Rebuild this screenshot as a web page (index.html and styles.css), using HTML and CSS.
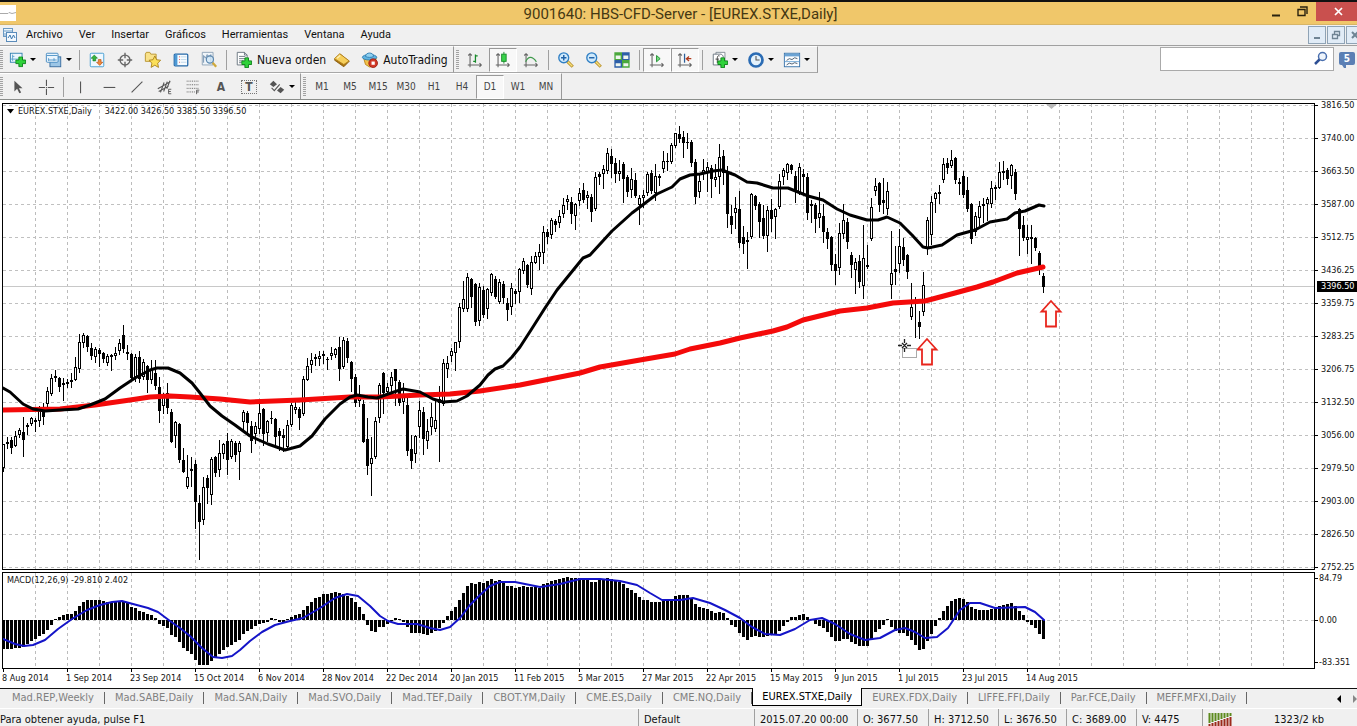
FILE: index.html
```html
<!DOCTYPE html>
<html lang="es">
<head>
<meta charset="utf-8">
<title>9001640: HBS-CFD-Server - [EUREX.STXE,Daily]</title>
<link rel="stylesheet" href="styles.css">
</head>
<body>
<svg class="defs" aria-hidden="true">
  <defs>
    <symbol id="i-plus" viewBox="0 0 12 12"><path d="M4 .5h4V4h3.500v4H8v3.500H4V8H.5V4H4z" fill="#2fd23a" stroke="#0a7d16"/></symbol>
    <symbol id="i-newchart" viewBox="0 0 20 20"><rect x="1.500" y="2.500" width="13" height="10" fill="#eaf5fd" stroke="#2f7fb0"/><path d="M4 4v7M2 9h11M4 6h2" stroke="#5aa2cc" fill="none"/><use href="#i-plus" x="7" y="6" width="12" height="12"/></symbol>
    <symbol id="i-profiles" viewBox="0 0 20 20"><rect x="5.500" y="6.500" width="12" height="11" fill="#9cc6e6" stroke="#34699c"/><rect x="1.500" y="2.500" width="13" height="10" rx="1" fill="#eaf5fd" stroke="#3f86bd"/><path d="M2 5h12M4 10h9M4 8v3M10 8v3" stroke="#4d93c6" fill="none"/></symbol>
    <symbol id="i-market" viewBox="0 0 20 20"><rect x="2.500" y="2.500" width="15" height="15" rx="1" fill="#eef8ff" stroke="#3f9bd0"/><path d="M7 4.500l3.500 3.500H8.500v3h-3V8H3.500z" fill="#35b53f" stroke="#157a22" stroke-width=".7"/><path d="M13 16l-3.500-3.500h2v-3h3v3h2z" fill="#f08a3c" stroke="#b44c12" stroke-width=".7"/></symbol>
    <symbol id="i-target" viewBox="0 0 20 20"><circle cx="10" cy="10" r="5.500" fill="none" stroke="#666" stroke-width="1.500"/><path d="M10 2v6M10 12v6M2 10h6M12 10h6" stroke="#666" stroke-width="1.500"/></symbol>
    <symbol id="i-star" viewBox="0 0 20 20"><path d="M1.500 3.500l1-2h4l1 2h6v8h-12z" fill="#f9e28a" stroke="#b8922a"/><path d="M12 5.500l2 4.200 4.500.6-3.300 3.200.9 4.700L12 15.800l-4.100 2.400.9-4.700-3.300-3.200 4.500-.6z" fill="#fbe05a" stroke="#a8801c"/></symbol>
    <symbol id="i-nav" viewBox="0 0 20 20"><rect x="2.500" y="3.500" width="15" height="13" rx="1" fill="#f7fcff" stroke="#2468a8" stroke-width="1.400"/><path d="M3 4h3v12H3z" fill="#4d9ad6"/><path d="M8 6.500h1M8 9.500h1M8 12.500h1" stroke="#d33"/><path d="M10 6.500h6M10 9.500h6M10 12.500h6" stroke="#b9d4e8"/></symbol>
    <symbol id="i-tester" viewBox="0 0 20 20"><path d="M2.500 1.500h12v14h-12z" fill="#f0f5f9" stroke="#8aa0b4"/><path d="M4 13V5l2 3 2-4 2 3 2-3v8" fill="none" stroke="#6f8fae"/><circle cx="11" cy="9.500" r="4" fill="#cfe6f6" fill-opacity=".8" stroke="#5a86ae" stroke-width="1.300"/><path d="M14 13l4 4.500" stroke="#cfa93c" stroke-width="2.500"/></symbol>
    <symbol id="i-order" viewBox="0 0 20 20"><path d="M2.500 1.500h8l3 3v11h-11z" fill="#fff" stroke="#64707c"/><path d="M10.500 1.500v3h3M4.500 6h7M4.500 8.500h7M4.500 11h5M4.500 13h4" stroke="#64707c" fill="none"/><use href="#i-plus" x="7" y="7" width="12" height="12"/></symbol>
    <symbol id="i-book" viewBox="0 0 20 20"><path d="M1.500 10L8 3.500l10 8-6 6z" fill="#a8720f" stroke="#8a5c0c"/><path d="M1.500 8.500L7.500 3l10.500 8-6 4z" fill="#f6cf5c" stroke="#b07f1c"/><path d="M4.500 8l3.500-3" stroke="#fdf0b4" stroke-width="1.500"/></symbol>
    <symbol id="i-auto" viewBox="0 0 20 20"><path d="M3 8h14l-2 7-5 3-5-3z" fill="#f2c14a" stroke="#b98419"/><ellipse cx="9.500" cy="7" rx="8" ry="3" fill="#5fb4e2" stroke="#2d7cb0"/><path d="M5 6c0-5 9-5 9 0 -2 1.500-7 1.500-9 0z" fill="#8fd0f0" stroke="#2d7cb0"/><circle cx="13.500" cy="13.500" r="4.800" fill="#d23a28" stroke="#9c1d10"/><path d="M11.700 11.700h3.600v3.600h-3.600z" fill="#fff"/></symbol>
    <symbol id="i-axes" viewBox="0 0 20 20"><path d="M4.500 3v15M2 15.500h15M2.500 5l2-2 2 2M15 13.500l2 2-2 2" fill="none" stroke="#666" stroke-width="1.200"/></symbol>
    <symbol id="i-bars" viewBox="0 0 20 20"><use href="#i-axes" width="20" height="20"/><path d="M10.500 4v9M8 11.500h2.500M10.500 5.500H13" stroke="#178a2a" stroke-width="1.400" fill="none"/></symbol>
    <symbol id="i-candle" viewBox="0 0 20 20"><use href="#i-axes" width="20" height="20"/><path d="M11 1v13" stroke="#178a2a"/><rect x="8.500" y="3.500" width="5" height="8" fill="#39d24a" stroke="#178a2a"/></symbol>
    <symbol id="i-line" viewBox="0 0 20 20"><use href="#i-axes" width="20" height="20"/><path d="M4 12c3-6 7-7 12 0" stroke="#3f9a4c" stroke-width="1.300" fill="none"/></symbol>
    <symbol id="i-zoomin" viewBox="0 0 20 20"><path d="M11.500 11.500l6 6" stroke="#b8902c" stroke-width="3.500"/><path d="M12 12l5 5" stroke="#f6e07a" stroke-width="1.500"/><circle cx="7.500" cy="7.500" r="5.500" fill="#cfe9fb" stroke="#2f7fc4" stroke-width="1.500"/><path d="M7.500 4.500v6M4.500 7.500h6" stroke="#1f62a8" stroke-width="1.600"/></symbol>
    <symbol id="i-zoomout" viewBox="0 0 20 20"><path d="M11.500 11.500l6 6" stroke="#b8902c" stroke-width="3.500"/><path d="M12 12l5 5" stroke="#f6e07a" stroke-width="1.500"/><circle cx="7.500" cy="7.500" r="5.500" fill="#cfe9fb" stroke="#2f7fc4" stroke-width="1.500"/><path d="M4.500 7.500h6" stroke="#1f62a8" stroke-width="1.600"/></symbol>
    <symbol id="i-tile" viewBox="0 0 20 20"><path d="M1.500 1.500H10V10H1.500zM10 10h8.500v8.500H10z" fill="#4aa83c"/><path d="M10 1.500h8.500V10H10zM1.500 10H10v8.500H1.500z" fill="#2d5fa8"/><path d="M3 5h5.500v4H3zM11.500 5H17v4h-5.500zM3 13.500h5.500v3.500H3zM11.500 13.500H17v3.500h-5.500z" fill="#eef6ee"/></symbol>
    <symbol id="i-scroll" viewBox="0 0 20 20"><use href="#i-axes" width="20" height="20"/><path d="M9.500 5v7l4-3.500z" fill="#7be085" stroke="#178a2a"/></symbol>
    <symbol id="i-shift" viewBox="0 0 20 20"><use href="#i-axes" width="20" height="20"/><path d="M9.500 3v10" stroke="#2b5f9a" stroke-width="1.400"/><path d="M17 8.500h-5M14.500 6l-3 2.500 3 2.500" stroke="#b03a1c" stroke-width="1.400" fill="none"/></symbol>
    <symbol id="i-indic" viewBox="0 0 20 20"><path d="M5.500 1.500h10v12h-10z" fill="#fff" stroke="#7d8891"/><path d="M2.500 3.500h9l2 2v10h-11z" fill="#fff" stroke="#64707c"/><path d="M9.500 5.500c-2-1-2.500 1-2.500 3v5M5 9h4" stroke="#333" fill="none"/><use href="#i-plus" x="7" y="7" width="12" height="12"/></symbol>
    <symbol id="i-clock" viewBox="0 0 20 20"><circle cx="10" cy="10" r="7.200" fill="#e4f2fc" stroke="#2b6cb4" stroke-width="3"/><path d="M10 5.500V10h4" stroke="#555" stroke-width="1.200" fill="none"/></symbol>
    <symbol id="i-templ" viewBox="0 0 20 20"><rect x="1.500" y="2.500" width="17" height="15" fill="#fbfdff" stroke="#336fa8"/><path d="M2 3h16v3H2z" fill="#6ba3d4"/><path d="M2 11.800h16" stroke="#6ba3d4"/><path d="M4 10.500l3-2 3 1 3-2 3 1M4 15.500l3-2 3 1 3-1.500 3 1" stroke="#456" fill="none"/></symbol>
    <symbol id="i-cursor" viewBox="0 0 20 20"><path d="M6 3v12l3-3 2.500 5 2-1-2.500-4.500h4z" fill="#555"/></symbol>
    <symbol id="i-cross" viewBox="0 0 20 20"><path d="M10.500 2v7M10.500 12v7M2 10.500h7M12 10.500h7" stroke="#555" stroke-width="1.200"/><path d="M10 10h1v1h-1z" fill="#555"/></symbol>
    <symbol id="i-vline" viewBox="0 0 20 20"><path d="M9.500 4v13" stroke="#555" stroke-width="1.200"/></symbol>
    <symbol id="i-hline" viewBox="0 0 20 20"><path d="M4 10.500h13" stroke="#555" stroke-width="1.200"/></symbol>
    <symbol id="i-diag" viewBox="0 0 20 20"><path d="M4 16L16 4" stroke="#555" stroke-width="1.200"/></symbol>
    <symbol id="i-chan" viewBox="0 0 20 20"><path d="M2 12l14-8M3 15l11-6M5 16l4-11M8.500 15l4-11M12 12l3.500-9" stroke="#555" stroke-width="1.200"/><path d="M17 12.500h-3v5h3M14 15h2.500" stroke="#555" fill="none"/></symbol>
    <symbol id="i-fibo" viewBox="0 0 20 20"><path d="M3 3.500h14M3 7.500h14M3 11.500h14M3 15.500h9" stroke="#555" stroke-dasharray="1 1"/><path d="M17 13.500h-3V18M14 15.500h2.500" stroke="#555" fill="none"/></symbol>
    <symbol id="i-shapes" viewBox="0 0 20 20"><path d="M6 3l4 4-4 3-4-3z M14 10l4 3-4 4-4-3z" fill="#555"/><path d="M4 11l3 3 6-7" stroke="#555" fill="none" stroke-width="1.200"/></symbol>
  </defs>
</svg>

<header class="titlebar">
  <span class="app-icon"><svg width="16" height="16"><path d="M0 8.500h8l1-1 3 1 4-1" stroke="#aaa" fill="none"/></svg></span>
  <h1 class="title">9001640: HBS-CFD-Server - [EUREX.STXE,Daily]</h1>
  <div class="winbtns">
    <button class="winbtn" aria-label="Minimizar"><svg width="10" height="10"><path d="M1 8.500h8" stroke="#2a230f" stroke-width="2"/></svg></button>
    <button class="winbtn" aria-label="Restaurar"><svg width="11" height="11"><path d="M1 3.500h7v6H1zM3 1h7v7" stroke="#2a230f" stroke-width="1.400" fill="none"/></svg></button>
    <button class="winbtn winbtn-close" aria-label="Cerrar"><svg width="9" height="9"><path d="M1 1l7 7M8 1l-7 7" stroke="#fff" stroke-width="1.700"/></svg></button>
  </div>
</header>

<nav class="menubar">
  <svg class="menu-icon" width="16" height="16"><rect x="1.500" y="1.500" width="9" height="8" fill="#eef7fd" stroke="#6b9ac4"/><path d="M1 4h10M3 6v3" stroke="#6b9ac4"/><rect x="4.500" y="5.500" width="10" height="9" fill="#f3f9fe" stroke="#5b8cba"/><path d="M6 11l2-3 1.500 4 2-4 1.500 3" stroke="#3c78ae" fill="none"/></svg>
  <button class="menu">Archivo</button><button class="menu">Ver</button><button class="menu">Insertar</button><button class="menu">Gráficos</button><button class="menu">Herramientas</button><button class="menu">Ventana</button><button class="menu">Ayuda</button>
  <div class="mdi">
    <button class="mdibtn" aria-label="Minimizar gráfico"><svg width="10" height="10"><path d="M2 8h6" stroke="#6f8494" stroke-width="2"/></svg></button>
    <button class="mdibtn" aria-label="Restaurar gráfico"><svg width="10" height="10"><path d="M1.500 4.500h5v4h-5zM3.500 4V1.500h5v4H7" stroke="#6f8494" stroke-width="1.300" fill="none"/></svg></button>
    <button class="mdibtn" aria-label="Cerrar gráfico"><svg width="10" height="10"><path d="M2 2l6 6M8 2L2 8" stroke="#6f8494" stroke-width="2"/></svg></button>
  </div>
</nav>

<div class="toolrow">
  <div class="toolbar">
    <span class="grip"></span>
    <button class="tool drop" aria-label="Nuevo gráfico"><svg class="ico"><use href="#i-newchart"/></svg></button>
    <button class="tool drop" aria-label="Perfiles"><svg class="ico"><use href="#i-profiles"/></svg></button>
    <span class="sep"></span>
    <button class="tool" aria-label="Observación del mercado"><svg class="ico"><use href="#i-market"/></svg></button>
    <button class="tool" aria-label="Ventana de datos"><svg class="ico"><use href="#i-target"/></svg></button>
    <button class="tool" aria-label="Navegador"><svg class="ico"><use href="#i-star"/></svg></button>
    <button class="tool" aria-label="Terminal"><svg class="ico"><use href="#i-nav"/></svg></button>
    <button class="tool" aria-label="Probador"><svg class="ico"><use href="#i-tester"/></svg></button>
    <span class="sep"></span>
    <button class="tool wide"><svg class="ico"><use href="#i-order"/></svg><span>Nueva orden</span></button>
    <button class="tool" aria-label="MetaEditor"><svg class="ico"><use href="#i-book"/></svg></button>
    <button class="tool wide"><svg class="ico"><use href="#i-auto"/></svg><span>AutoTrading</span></button>
  </div>
  <div class="toolbar">
    <span class="grip"></span>
    <button class="tool" aria-label="Barras"><svg class="ico"><use href="#i-bars"/></svg></button>
    <button class="tool pressed" aria-label="Velas"><svg class="ico"><use href="#i-candle"/></svg></button>
    <button class="tool" aria-label="Línea"><svg class="ico"><use href="#i-line"/></svg></button>
    <span class="sep"></span>
    <button class="tool" aria-label="Acercar"><svg class="ico"><use href="#i-zoomin"/></svg></button>
    <button class="tool" aria-label="Alejar"><svg class="ico"><use href="#i-zoomout"/></svg></button>
    <button class="tool" aria-label="Mosaico"><svg class="ico"><use href="#i-tile"/></svg></button>
    <span class="sep"></span>
    <button class="tool pressed" aria-label="Desplazamiento automático"><svg class="ico"><use href="#i-scroll"/></svg></button>
    <button class="tool pressed" aria-label="Desplazar gráfico"><svg class="ico"><use href="#i-shift"/></svg></button>
    <span class="sep"></span>
    <button class="tool drop" aria-label="Indicadores"><svg class="ico"><use href="#i-indic"/></svg></button>
    <button class="tool drop" aria-label="Períodos"><svg class="ico"><use href="#i-clock"/></svg></button>
    <button class="tool drop" aria-label="Plantillas"><svg class="ico"><use href="#i-templ"/></svg></button>
  </div>
  <form class="search">
    <input class="search-input" type="text" aria-label="Buscar">
    <button class="search-btn" type="button" aria-label="Buscar"><svg width="14" height="14"><circle cx="8.500" cy="5.500" r="4" fill="#eef4fb" stroke="#4a6fae" stroke-width="1.500"/><path d="M5.500 8.500L1 13" stroke="#2d4f94" stroke-width="2.500"/></svg></button>
    <button class="news" type="button">5</button>
  </form>
</div>

<div class="toolrow toolrow-second">
  <div class="toolbar">
    <span class="grip"></span>
    <button class="tool" aria-label="Cursor"><svg class="ico"><use href="#i-cursor"/></svg></button>
    <button class="tool" aria-label="Cruz"><svg class="ico"><use href="#i-cross"/></svg></button>
    <span class="sep"></span>
    <button class="tool" aria-label="Línea vertical"><svg class="ico"><use href="#i-vline"/></svg></button>
    <button class="tool" aria-label="Línea horizontal"><svg class="ico"><use href="#i-hline"/></svg></button>
    <button class="tool" aria-label="Línea de tendencia"><svg class="ico"><use href="#i-diag"/></svg></button>
    <button class="tool" aria-label="Canal equidistante"><svg class="ico"><use href="#i-chan"/></svg></button>
    <button class="tool" aria-label="Fibonacci"><svg class="ico"><use href="#i-fibo"/></svg></button>
    <button class="tool glyph">A</button>
    <button class="tool glyph"><span class="boxed">T</span></button>
    <button class="tool drop" aria-label="Flechas"><svg class="ico"><use href="#i-shapes"/></svg></button>
  </div>
  <div class="toolbar">
    <span class="grip"></span>
    <button class="tool tf">M1</button><button class="tool tf">M5</button><button class="tool tf">M15</button><button class="tool tf">M30</button><button class="tool tf">H1</button><button class="tool tf">H4</button><button class="tool tf pressed">D1</button><button class="tool tf">W1</button><button class="tool tf">MN</button>
  </div>
</div>

<main class="chart">
  <section class="pane price-pane">
    <svg class="plot" id="price-plot" role="img" aria-label="EUREX.STXE diario"></svg>
    <p class="caption"><svg width="7" height="5"><path d="M0 0h7L3.500 4.500z"/></svg><span class="symbol">EUREX.STXE,Daily</span><span>3422.00 3426.50 3385.50 3396.50</span></p>
  </section>
  <div class="axis price-axis">
    <span>3816.50</span><span>3740.00</span><span>3663.50</span><span>3587.00</span><span>3512.75</span><span>3436.25</span><span>3359.75</span><span>3283.25</span><span>3206.75</span><span>3132.50</span><span>3056.00</span><span>2979.50</span><span>2903.00</span><span>2826.50</span><span>2752.25</span>
    <strong class="quote">3396.50</strong>
  </div>
  <section class="pane macd-pane">
    <svg class="plot" id="macd-plot" role="img" aria-label="MACD"></svg>
    <p class="caption">MACD(12,26,9) -29.810 2.402</p>
  </section>
  <div class="axis macd-axis"><span>84.79</span><span>0.00</span><span>-83.351</span></div>
  <div class="dates">
    <span>8 Aug 2014</span><span>1 Sep 2014</span><span>23 Sep 2014</span><span>15 Oct 2014</span><span>6 Nov 2014</span><span>28 Nov 2014</span><span>22 Dec 2014</span><span>20 Jan 2015</span><span>11 Feb 2015</span><span>5 Mar 2015</span><span>27 Mar 2015</span><span>22 Apr 2015</span><span>15 May 2015</span><span>9 Jun 2015</span><span>1 Jul 2015</span><span>23 Jul 2015</span><span>14 Aug 2015</span>
  </div>
</main>

<nav class="tabs">
  <a class="tab" href="#">Mad.REP,Weekly</a><a class="tab" href="#">Mad.SABE,Daily</a><a class="tab" href="#">Mad.SAN,Daily</a><a class="tab" href="#">Mad.SVO,Daily</a><a class="tab" href="#">Mad.TEF,Daily</a><a class="tab" href="#">CBOT.YM,Daily</a><a class="tab" href="#">CME.ES,Daily</a><a class="tab" href="#">CME.NQ,Daily</a><a class="tab active" href="#" aria-current="page">EUREX.STXE,Daily</a><a class="tab" href="#">EUREX.FDX,Daily</a><a class="tab" href="#">LIFFE.FFI,Daily</a><a class="tab" href="#">Par.FCE,Daily</a><a class="tab" href="#">MEFF.MFXI,Daily</a>
  <div class="tab-scroll">
    <button class="arrow" aria-label="Anterior"><svg width="5" height="8"><path d="M4 0v8L0 4z"/></svg></button>
    <button class="arrow" aria-label="Siguiente"><svg width="5" height="8"><path d="M0 0v8l4-4z" fill="#888"/></svg></button>
  </div>
</nav>

<footer class="status">
  <span class="help">Para obtener ayuda, pulse F1</span>
  <span>Default</span><span>2015.07.20 00:00</span><span>O: 3677.50</span><span>H: 3712.50</span><span>L: 3676.50</span><span>C: 3689.00</span><span>V: 4475</span>
  <span class="link-state"><svg width="24" height="13"><path d="M1.500 0v10M4.500 0v9M7.500 0v8M10.500 0v7M13.500 0v6M16.500 0v5M19.500 0v4M22.500 0v3" stroke="#5d8a1e" stroke-width="2"/><path d="M1.500 11v2M4.500 10v3M7.500 9v4M10.500 8v5M13.500 7v6M16.500 6v7M19.500 5v8M22.500 4v9" stroke="#9c2a1c" stroke-width="2"/></svg><span>1323/2 kb</span></span>
</footer>
<script src="chart.js"></script>
</body>
</html>
```
FILE: styles.css
```css
* { box-sizing: border-box; }
html { height: 100%; }
body {
  margin: 0;
  height: 100%;
  display: flex;
  flex-direction: column;
  overflow: hidden;
  background: #f0f0f0;
  color: #111;
  font: 11px/14px "DejaVu Sans Condensed", "Noto Sans", sans-serif;
}
button {
  margin: 0;
  padding: 0;
  border: 0;
  background: none;
  color: inherit;
  font: inherit;
}
svg { display: block; flex: none; }
.defs { position: absolute; width: 0; height: 0; }

.titlebar {
  flex: none;
  display: flex;
  align-items: flex-start;
  height: 25px;
  background: #f0c76a;
  border-top: 2px solid #111;
  border-bottom: 1px solid #d8b566;
}
.app-icon { width: 16px; height: 16px; margin-top: 3px; background: #fff; }
.title {
  flex: 1;
  margin: 0;
  padding-left: 82px;
  text-align: center;
  font: 15px/24px Roboto, "Noto Sans", sans-serif;
  color: #453813;
}
.winbtns { display: flex; }
.winbtn { width: 26px; height: 19px; display: flex; align-items: center; justify-content: center; }
.winbtn-close { width: 41px; margin-left: 1px; background: #c9504e; padding-left: 4px; }

.menubar {
  flex: none;
  display: flex;
  align-items: center;
  height: 21px;
  border-bottom: 1px solid #a0a0a0;
  font: 11px/20px Roboto, "Liberation Sans", sans-serif;
}
.menu-icon { margin-left: 2px; margin-right: 8px; }
.menu { margin-right: 16px; }
.mdi { display: flex; gap: 1px; margin-left: auto; margin-right: -7px; }
.mdibtn {
  width: 18px;
  height: 18px;
  display: flex;
  align-items: center;
  justify-content: center;
  background: #e1ecf7;
  border: 1px solid #8fa3b5;
}

.toolrow { flex: none; display: flex; height: 27px; }
.toolrow-second { border-bottom: 1px solid #8a8d8a; }
.toolbar {
  display: flex;
  align-items: center;
  border-top: 1px solid #fff;
  border-right: 1px solid #999;
  border-bottom: 1px solid #a8a8a8;
  padding-right: 3px;
}
.toolrow-second .toolbar { border-bottom: 0; padding-right: 1px; }
.toolbar + .toolbar { padding-left: 2px; }
.grip {
  width: 3px;
  height: 20px;
  margin-right: 1px;
  background: repeating-linear-gradient(#a2a2a2 0 1px, #f0f0f0 1px 2px);
}
.toolbar + .toolbar .grip { margin-right: 2px; }
.sep { width: 7px; height: 20px; border-left: 3px solid #f0f0f0; background: linear-gradient(90deg, #a0a0a0 1px, #f0f0f0 1px); }
.tool {
  flex: none;
  display: flex;
  align-items: center;
  justify-content: center;
  width: 28px;
  height: 24px;
  border: 1px solid transparent;
}
.ico { width: 18px; height: 18px; }
.drop { width: 36px; justify-content: flex-start; padding-left: 4px; }
.drop::after {
  content: "";
  margin-left: 3px;
  border: 3px solid transparent;
  border-top-color: #000;
  border-bottom: 0;
}
.wide { width: auto; padding: 0 1px 0 4px; gap: 4px; font-size: 12px; }
.pressed { background: #f8f8f8; border-color: #999 #fff #fff #999; }
.glyph { color: #555; font-weight: bold; font-size: 12px; }
.boxed { padding: 0 3px; border: 1px dotted #777; line-height: 12px; }
.tf { font-size: 10px; color: #444; }

.search { display: flex; margin-left: auto; padding: 1px 0; }
.search-input { width: 174px; height: 24px; padding: 0 22px 0 4px; border: 1px solid #aaa; background: #fff; font: inherit; }
.search-btn { width: 22px; height: 22px; margin-left: -20px; display: flex; align-items: center; position: relative; }
.news {
  position: relative;
  width: 16px;
  height: 13px;
  margin: 5px 2px 0 3px;
  border-radius: 2px;
  background: #5b7fb4;
  color: #fff;
  font-size: 10px;
  font-weight: bold;
  line-height: 13px;
}
.news::after { content: ""; position: absolute; left: 3px; top: 13px; border: 2px solid transparent; border-top: 3px solid #5b7fb4; border-right-color: #5b7fb4; border-bottom: 0; }

.chart {
  flex: 1;
  min-height: 0;
  display: grid;
  grid-template-columns: 1fr 42px;
  grid-template-rows: minmax(0, 1fr) 98px 19px;
  padding-left: 2px;
  background: #fff;
  font-size: 9px;
  line-height: 11px;
  border-bottom: 1px solid #111;
  overflow: hidden;
}
.pane { position: relative; border: 1px solid #000; overflow: hidden; }
.price-pane { margin: 3px 0 1px; }
.macd-pane { margin-top: 1px; }
.plot { position: absolute; inset: 0; width: 100%; height: 100%; }
.caption { position: absolute; left: 4px; top: 2px; margin: 0; display: flex; gap: 4px; align-items: center; }
.symbol { margin-right: 9px; }
.axis { position: relative; display: flex; flex-direction: column; }
.axis span { position: relative; padding-left: 6px; }
.axis span::before { content: ""; position: absolute; left: 0; top: 5px; width: 3px; height: 1px; background: #000; }
.price-axis { gap: 22px; }
.quote {
  position: absolute;
  left: 2px;
  right: 0;
  top: 181px;
  padding-left: 4px;
  background: #000;
  color: #fff;
  font-weight: normal;
}
.macd-axis { justify-content: space-between; padding: 2px 0 1px; }
.macd-axis span { padding-left: 4px; }
.dates { display: flex; grid-column: 1 / -1; }
.dates span { flex: none; position: relative; width: 64px; padding-top: 4px; white-space: nowrap; }
.dates span::before { content: ""; position: absolute; left: 1px; top: 0; width: 1px; height: 3px; background: #000; }

.tabs { flex: none; display: flex; height: 20px; padding-left: 2px; border-bottom: 1px solid #fff; }
.tab {
  position: relative;
  padding: 0 11px 0 10px;
  color: #808080;
  text-decoration: none;
  line-height: 17px;
  white-space: nowrap;
}
.tab::after { content: ""; position: absolute; right: 0; top: 3px; width: 1px; height: 12px; background: #666; }
.tab.active { height: 18px; margin-top: -1px; line-height: 18px; padding: 0 9px; background: #fff; color: #000; border: 1px solid #000; border-top: 0; }
.tab.active::after { content: none; }
.tab-scroll { display: flex; gap: 11px; align-items: center; margin-left: auto; margin-right: -1px; }

.status {
  flex: none;
  display: grid;
  grid-template-columns: 1fr 116px 103px 71px 70px 68px 70px 66px 155px;
  height: 17px;
  line-height: 14px;
  white-space: nowrap;
}
.status > span { padding: 4px 0 0 5px; border-left: 1px solid #a0a0a0; }
.status .help { padding-left: 0; border-left: 0; }
.status .link-state { display: flex; gap: 42px; }
```
FILE: chart.js
```js
const STEP = 4;
const FIRST_X = 3;

// high, body top, body bottom, low (canvas y) and f = filled / o = hollow
const candles = `444 444 468 471 o|437 442 444 448 f|437 440 448 453 f|431 436 446 446 o|428 430 435 437 o|417 432 440 456 f|423 425 427 434 f|417 418 424 425 o|418 420 422 431 f|406 408 421 426 o|403 408 417 424 f|387 391 404 406 o|374 378 394 395 o|370 376 378 381 f|377 378 387 391 f|378 383 385 400 f|379 382 384 387 f|373 380 382 387 f|357 367 380 380 o|334 342 369 372 o|333 335 343 347 o|335 336 347 351 f|343 348 356 359 f|347 349 357 362 o|348 350 354 366 f|352 353 359 362 f|354 356 363 365 o|354 355 357 370 f|347 353 356 359 o|339 343 351 354 o|325 335 349 352 f|345 352 354 359 f|353 354 378 379 f|354 357 377 381 o|351 357 379 382 f|359 362 377 379 o|365 366 380 392 f|360 370 380 383 o|360 373 386 389 f|377 387 411 422 f|393 397 406 413 o|383 393 408 413 f|409 412 442 442 f|421 422 436 447 o|423 424 460 462 f|448 460 472 472 f|455 477 487 488 o|457 469 471 486 f|460 464 502 528 f|495 503 522 559 f|477 487 520 524 o|475 478 488 503 f|457 459 495 504 o|456 457 473 476 f|440 453 470 476 o|443 444 454 458 o|433 441 460 474 f|439 441 457 458 o|441 443 455 461 f|441 443 452 479 o|410 412 422 431 o|411 413 423 433 f|421 426 441 452 f|422 426 434 443 o|403 413 429 433 o|408 409 434 445 f|420 421 433 441 o|411 418 419 423 f|418 419 437 445 f|428 431 436 450 f|429 435 438 451 f|420 425 447 448 o|403 405 425 426 o|402 407 410 413 o|407 409 418 429 f|376 379 414 415 o|358 366 380 380 o|353 360 365 372 o|354 357 359 365 f|351 356 359 365 o|351 354 356 363 f|357 359 360 369 f|347 353 356 359 o|348 349 355 357 o|337 347 369 380 f|337 340 367 368 o|338 341 358 362 f|361 362 379 391 f|374 377 403 406 f|385 398 401 406 o|400 404 442 442 f|418 439 466 474 f|437 458 464 495 o|417 421 457 458 o|383 385 418 422 o|372 373 393 413 f|383 387 392 395 o|372 377 386 391 o|369 369 381 405 f|380 382 403 405 f|383 397 402 413 o|397 405 451 455 f|435 449 461 468 f|435 436 454 462 o|401 410 427 437 o|407 412 439 454 f|419 431 441 448 o|403 417 427 434 o|400 420 429 431 o|386 399 403 461 o|359 363 404 405 o|356 363 369 377 o|348 351 356 361 o|342 342 353 370 o|303 307 342 347 o|281 299 309 311 o|273 277 309 311 o|278 279 297 307 f|283 284 322 325 f|283 287 321 325 o|286 290 315 317 f|288 289 309 318 o|273 274 293 295 o|276 279 297 298 f|279 282 302 303 o|281 284 298 303 f|298 303 310 320 f|283 288 307 314 o|289 291 294 303 f|268 269 292 302 o|258 261 271 273 o|264 265 285 287 f|256 262 289 294 o|252 256 263 263 o|244 252 257 269 o|226 232 253 263 o|229 232 237 243 f|218 220 235 238 o|219 221 225 231 f|210 216 223 227 o|198 205 214 217 o|195 199 202 209 o|197 202 214 223 f|203 204 216 229 o|188 193 201 205 o|183 190 200 202 f|191 195 198 208 o|194 197 212 221 f|172 177 209 210 o|172 174 177 184 f|165 169 174 188 o|148 153 171 173 o|149 156 164 177 f|158 163 174 182 f|160 171 174 180 o|162 164 179 202 f|175 177 192 196 f|168 179 190 197 o|173 180 196 197 f|195 198 205 224 o|190 195 198 207 o|172 174 193 195 o|170 173 191 193 f|164 176 193 200 o|174 176 178 185 f|151 161 169 172 o|153 161 162 170 f|143 145 162 163 o|133 133 146 147 o|126 134 139 142 f|131 137 143 157 f|133 142 143 148 f|140 142 163 166 f|159 162 197 203 f|174 181 192 197 o|159 170 173 179 o|162 167 173 191 o|165 168 179 197 f|164 177 180 186 o|144 157 177 193 o|150 156 173 184 f|166 171 214 227 f|205 216 225 233 f|197 208 213 228 o|191 209 243 247 f|226 237 244 253 f|232 240 242 268 f|193 194 237 238 o|195 196 206 209 f|202 204 222 237 f|205 218 236 238 f|206 210 236 251 o|199 210 219 231 f|208 209 217 238 o|174 181 207 208 o|168 170 177 184 o|163 164 173 179 o|164 165 170 173 f|171 176 192 202 f|163 167 192 194 o|169 174 177 193 f|173 177 213 219 f|200 204 206 222 f|203 205 219 232 f|192 213 218 227 o|204 216 232 242 f|228 232 239 248 f|236 237 265 270 f|254 264 271 284 f|223 233 268 274 o|204 220 234 238 o|218 222 242 248 f|252 255 265 277 f|258 262 270 293 o|255 261 282 287 f|225 258 286 298 o|245 265 267 268 f|198 207 239 240 o|178 186 191 195 o|182 183 205 211 f|178 200 203 213 f|182 191 209 214 o|231 273 285 298 o|246 269 272 284 f|229 246 264 272 o|238 247 260 265 f|254 255 272 278 f|283 307 317 319 o|297 300 302 337 f|311 322 327 338 f|272 285 312 315 o|217 220 249 254 o|196 202 235 244 o|192 193 199 212 o|185 192 194 203 f|158 164 180 182 o|158 163 168 173 f|150 160 166 167 o|157 158 180 183 f|178 182 184 194 f|171 176 195 197 f|177 190 209 211 f|203 204 239 243 f|212 216 232 235 o|201 206 218 225 o|198 204 206 222 f|197 199 204 220 o|181 188 204 207 o|185 187 189 199 f|162 172 188 188 o|161 171 173 179 f|168 170 179 184 f|164 165 176 188 o|169 172 194 199 f|208 209 229 255 f|216 225 238 240 f|225 237 240 253 o|225 237 239 263 f|237 238 248 250 f|251 253 270 274 f|273 276 287 292 f`
  .split('|').map(s => s.split(' '));

// histogram ends, in thirds of a pixel above (<165) or below (>165) the zero line
const macd = [250,250,250,247,247,243,233,225,219,210,204,192,178,163,156,151,148,147,138,123,111,105,105,105,105,107,110,112,110,109,111,113,125,129,137,141,146,151,160,173,180,187,207,213,229,245,255,265,281,297,297,297,284,276,265,253,243,236,229,221,205,194,190,181,173,172,169,160,163,167,168,162,156,151,148,135,122,110,99,95,88,87,85,82,85,88,94,98,111,126,148,177,194,197,184,182,174,165,160,163,168,182,200,202,202,204,206,200,195,186,170,153,138,127,104,85,64,55,56,51,54,49,43,49,46,53,63,63,69,66,63,66,66,66,68,57,53,48,45,42,40,37,39,40,40,42,45,51,50,46,44,39,42,46,50,57,70,75,84,96,105,105,111,111,111,107,106,101,94,91,91,91,98,117,127,129,132,137,144,141,144,158,177,184,201,213,221,213,210,213,214,211,208,208,194,179,168,156,155,151,147,156,163,173,180,187,199,213,225,225,218,218,228,233,240,240,240,222,199,190,177,162,182,196,200,201,210,223,237,251,248,225,204,180,160,139,122,108,101,98,102,111,126,133,136,136,136,133,128,124,121,118,114,122,137,151,167,177,187,205,218];

const fastAverage = '3,388 10,392 23,404 33,409 45,411 60,410 78,409 90,405 105,399 120,388 135,378 150,370 157,368 168,368 180,373 192,383 200,393 210,406 222,416 235,425 250,436 268,444 285,450 300,446 312,436 325,419 340,404 350,397 357,395 368,397 377,398 388,394 403,389 420,392 433,399 443,402 457,401 467,396 480,385 488,375 495,369 503,366 512,357 520,347 531,330 545,308 557,290 570,274 583,258 590,255 612,231 632,213 640,207 657,194 672,187 680,179 690,175 700,174 713,171 722,170 727,172 735,175 747,182 757,183 773,188 788,188 808,196 823,200 837,209 850,215 867,220 878,220 887,217 900,223 912,235 923,247 928,248 942,245 957,235 975,230 990,222 1007,219 1015,213 1025,211 1039,205 1044,206';
const slowAverage = '3,410 60,409 95,405 130,400 150,397 170,396 190,397 220,399 250,402 300,400 350,397 380,397 420,395 450,394 480,391 520,385 550,379 580,373 600,367 640,360 675,354 690,349 720,343 740,338 773,331 787,327 803,320 840,311 867,308 893,303 925,301 955,293 977,287 993,282 1017,273 1043,267';
const signal = '3,639 15,644 24,646 33,645 45,640 58,629 72,619 87,610 100,605 112,602 122,601 133,604 148,608 158,612 170,621 180,628 190,636 202,648 213,657 222,658 232,656 240,650 250,641 262,632 275,625 290,621 303,618 320,608 335,598 347,594 358,596 370,606 380,616 388,621 398,624 417,624 430,628 440,630 450,627 460,618 470,605 480,595 490,586 500,582 515,582 540,587 560,584 580,579 600,579 620,581 637,585 650,593 662,600 680,600 693,598 710,603 725,610 740,618 752,627 765,634 780,635 795,629 810,620 822,618 835,624 850,634 865,640 880,638 895,630 905,628 915,632 925,638 937,637 948,628 960,610 970,603 980,603 995,608 1025,607 1035,612 1044,620';

const rect = (x, y, w, h, extra = '') => `<rect x="${x}" y="${y}" width="${w}" height="${h}" ${extra}/>`;
const line = (points, color, width) => `<polyline points="${points}" fill="none" stroke="${color}" stroke-width="${width}" stroke-linejoin="round" stroke-linecap="round"/>`;
const up = (x, y) => `<path d="M${x} ${y}l9.500 10.500h-4.500v15h-10v-15h-4.500z" fill="#fffdfa" stroke="#e8251c" stroke-width="1.800"/>`;

function verticals(top, bottom) {
  let out = '';
  for (let x = 35.5; x < 2600; x += 32) {
    out += `<path d="M${x} ${top}V${bottom}" stroke="#bcbcbc" stroke-dasharray="3 3"/>`;
  }
  return out;
}

function drawPrice() {
  let s = verticals(104, 1400);
  for (let k = 0; k < 15; k++) {
    s += `<path d="M3 ${105.5 + 33 * k}H2600" stroke="#c0c0c0" stroke-dasharray="3 3"/>`;
  }
  s += rect(3, 286, 2600, 1, 'fill="#c8c8c8"');
  candles.forEach(([h, t, b, l, kind], i) => {
    const x = FIRST_X + STEP * i;
    s += rect(x, h, 1, l - h + 1);
    if (kind === 'f') s += rect(x - 1, t, 3, Math.max(1, b - t));
    else s += rect(x - 0.5, +t + 0.5, 2, Math.max(1, b - t - 1), 'fill="#fff" stroke="#000"');
  });
  s += line(slowAverage, '#f40a0a', 5) + line(fastAverage, '#000', 3);
  s += up(927, 339) + up(1051, 301);
  s += '<path d="M1046 104h11l-5.5 5z" fill="#b8b8b8"/>';
  s += '<rect x="902.500" y="348.500" width="14" height="9" fill="#fff" stroke="#aaa"/>';
  s += '<path d="M904.500 339v4M904.500 348v4M898 345.500h4M907 345.500h4M902 343l5 5M907 343l-5 5" stroke="#222" stroke-width="1.300"/>';
  document.getElementById('price-plot').innerHTML = `<g transform="translate(-3 -104)">${s}</g>`;
}

function drawMacd() {
  let s = verticals(573, 1400);
  s += '<path d="M3 620.500H2600" stroke="#c0c0c0" stroke-dasharray="3 3"/>';
  macd.forEach((v, i) => {
    const off = Math.round((165 - v) / 3);
    s += rect(FIRST_X + STEP * i - 1, off > 0 ? 620 - off : 620, 3, Math.abs(off) + (off > 0 ? 0 : 1));
  });
  s += line(signal, '#1414c8', 2);
  document.getElementById('macd-plot').innerHTML = `<g transform="translate(-3 -573)">${s}</g>`;
}

drawPrice();
drawMacd();
```
